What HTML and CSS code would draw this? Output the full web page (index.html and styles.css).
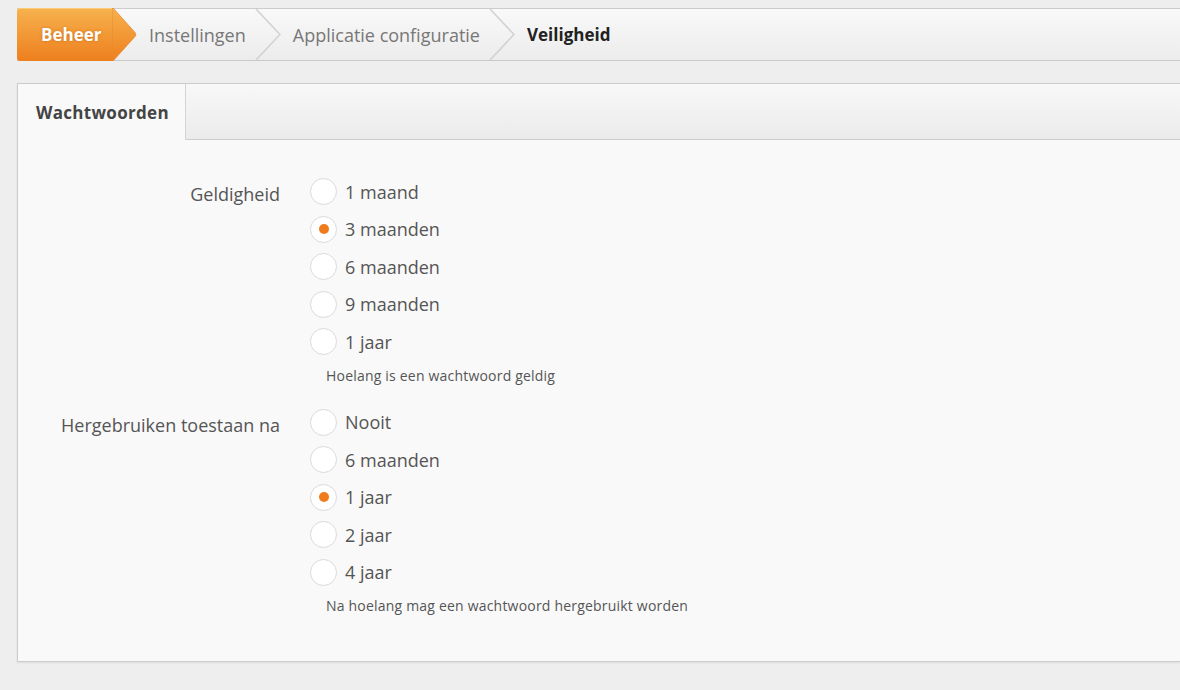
FILE: index.html
```html
<!DOCTYPE html>
<html lang="nl">
<head>
<meta charset="utf-8">
<title>Veiligheid</title>
<link rel="stylesheet" href="styles.css">
</head>
<body>
<div class="page">
  <nav class="crumbs">
    <div class="crumb-home">
      <span class="home-text">Beheer</span>
      <svg class="home-arrow" width="25" height="53" viewBox="0 0 25 53">
        <defs>
          <linearGradient id="og" x1="0" y1="0" x2="0" y2="53" gradientUnits="userSpaceOnUse">
            <stop offset="0" stop-color="#f6b24e"/>
            <stop offset="1" stop-color="#ee7f1e"/>
          </linearGradient>
        </defs>
        <path d="M0 0 L1 0 L23 24.5 Q24.5 26.5 23 28.5 L1 53 L0 53 Z" fill="url(#og)" stroke="#e58a2c" stroke-width="0.8"/>
      </svg>
    </div>
    <span class="crumb">Instellingen</span>
    <svg class="sep" width="26" height="51" viewBox="0 0 26 51"><polyline points="1,0 25,25.5 1,51" fill="none" stroke="#d2d2d2" stroke-width="1.6"/></svg>
    <span class="crumb">Applicatie configuratie</span>
    <svg class="sep" width="26" height="51" viewBox="0 0 26 51"><polyline points="1,0 25,25.5 1,51" fill="none" stroke="#d2d2d2" stroke-width="1.6"/></svg>
    <span class="crumb current">Veiligheid</span>
  </nav>

  <section class="panel">
    <div class="tabs">
      <div class="tab active">Wachtwoorden</div>
      <div class="tab-fill"></div>
    </div>
    <div class="panel-body">
      <div class="group">
        <div class="label">Geldigheid</div>
        <div class="options">
          <label class="opt"><span class="radio"></span>1 maand</label>
          <label class="opt"><span class="radio checked"></span>3 maanden</label>
          <label class="opt"><span class="radio"></span>6 maanden</label>
          <label class="opt"><span class="radio"></span>9 maanden</label>
          <label class="opt"><span class="radio"></span>1 jaar</label>
          <div class="help">Hoelang is een wachtwoord geldig</div>
        </div>
      </div>
      <div class="group">
        <div class="label">Hergebruiken toestaan na</div>
        <div class="options">
          <label class="opt"><span class="radio"></span>Nooit</label>
          <label class="opt"><span class="radio"></span>6 maanden</label>
          <label class="opt"><span class="radio checked"></span>1 jaar</label>
          <label class="opt"><span class="radio"></span>2 jaar</label>
          <label class="opt"><span class="radio"></span>4 jaar</label>
          <div class="help">Na hoelang mag een wachtwoord hergebruikt worden</div>
        </div>
      </div>
    </div>
  </section>
</div>
</body>
</html>
```

FILE: styles.css
```css
html, body {
  margin: 0;
  padding: 0;
  height: 100%;
}
body {
  background: #eeeeee;
  font-family: "Open Sans", "Noto Sans", "Liberation Sans", sans-serif;
  color: #555;
  overflow: hidden;
}
.page {
  padding: 8px 0 0 17px;
}

/* breadcrumbs */
.crumbs {
  display: flex;
  align-items: center;
  height: 51px;
  border-top: 1px solid #cccccc;
  border-bottom: 1px solid #c9c9c9;
  background: linear-gradient(#f9f9f9, #ececec);
  font-size: 18px;
}
.crumb-home {
  display: flex;
  align-self: stretch;
  margin: -1px 0 -1px 0;
  height: 53px;
}
.home-text {
  display: flex;
  align-items: center;
  padding: 0 10px 0 24px;
  width: 61px;
  background: linear-gradient(#f6b24e, #ee7f1e);
  border-radius: 3px 0 0 3px;
  color: #fff;
  font-size: 17px;
  font-weight: 700;
  text-shadow: 0 0 3px rgba(160, 70, 0, 0.45);
  box-shadow: inset 0 1px 0 rgba(255, 220, 150, 0.6);
}
.home-arrow {
  display: block;
}
.crumb {
  color: #777;
  padding: 0 9px 0 12px;
}
.crumb.current {
  color: #222;
  font-size: 17px;
  font-weight: 700;
  padding-left: 12px;
}
.sep {
  display: block;
  align-self: stretch;
}

/* panel */
.panel {
  margin-top: 22px;
  border: 1px solid #cccccc;
  border-right: none;
  background: #f9f9f9;
  box-shadow: 0 1px 2px rgba(0, 0, 0, 0.08);
}
.tabs {
  display: flex;
  height: 56px;
}
.tab {
  display: flex;
  align-items: center;
  width: 149px;
  padding-left: 18px;
  border-right: 1px solid #d4d4d4;
  font-size: 17px;
  letter-spacing: 0.3px;
  font-weight: 700;
  color: #444;
  background: #f9f9f9;
}
.tab-fill {
  flex: 1;
  background: linear-gradient(#f8f8f8, #ebebeb);
  border-bottom: 1px solid #cccccc;
}
.panel-body {
  padding: 33px 0 45px 0;
}
.group {
  display: flex;
}
.group + .group {
  margin-top: 18px;
}
.label {
  width: 262px;
  text-align: right;
  font-size: 18px;
  line-height: 37.5px;
  padding-top: 3px;
  color: #555;
}
.options {
  display: flex;
  flex-direction: column;
  margin-left: 30px;
}
.opt {
  display: flex;
  align-items: center;
  height: 37.5px;
  font-size: 18px;
  color: #555;
}
.radio {
  box-sizing: border-box;
  width: 27px;
  height: 27px;
  border: 1.5px solid #dadada;
  border-radius: 50%;
  background: #fff;
  margin-right: 8px;
  display: flex;
  align-items: center;
  justify-content: center;
}
.radio.checked::after {
  content: "";
  width: 10px;
  height: 10px;
  border-radius: 50%;
  background: #ef7b1a;
}
.help {
  margin: 5px 0 0 16px;
  font-size: 14px;
  letter-spacing: 0.2px;
  line-height: 20px;
  color: #555;
}
```
